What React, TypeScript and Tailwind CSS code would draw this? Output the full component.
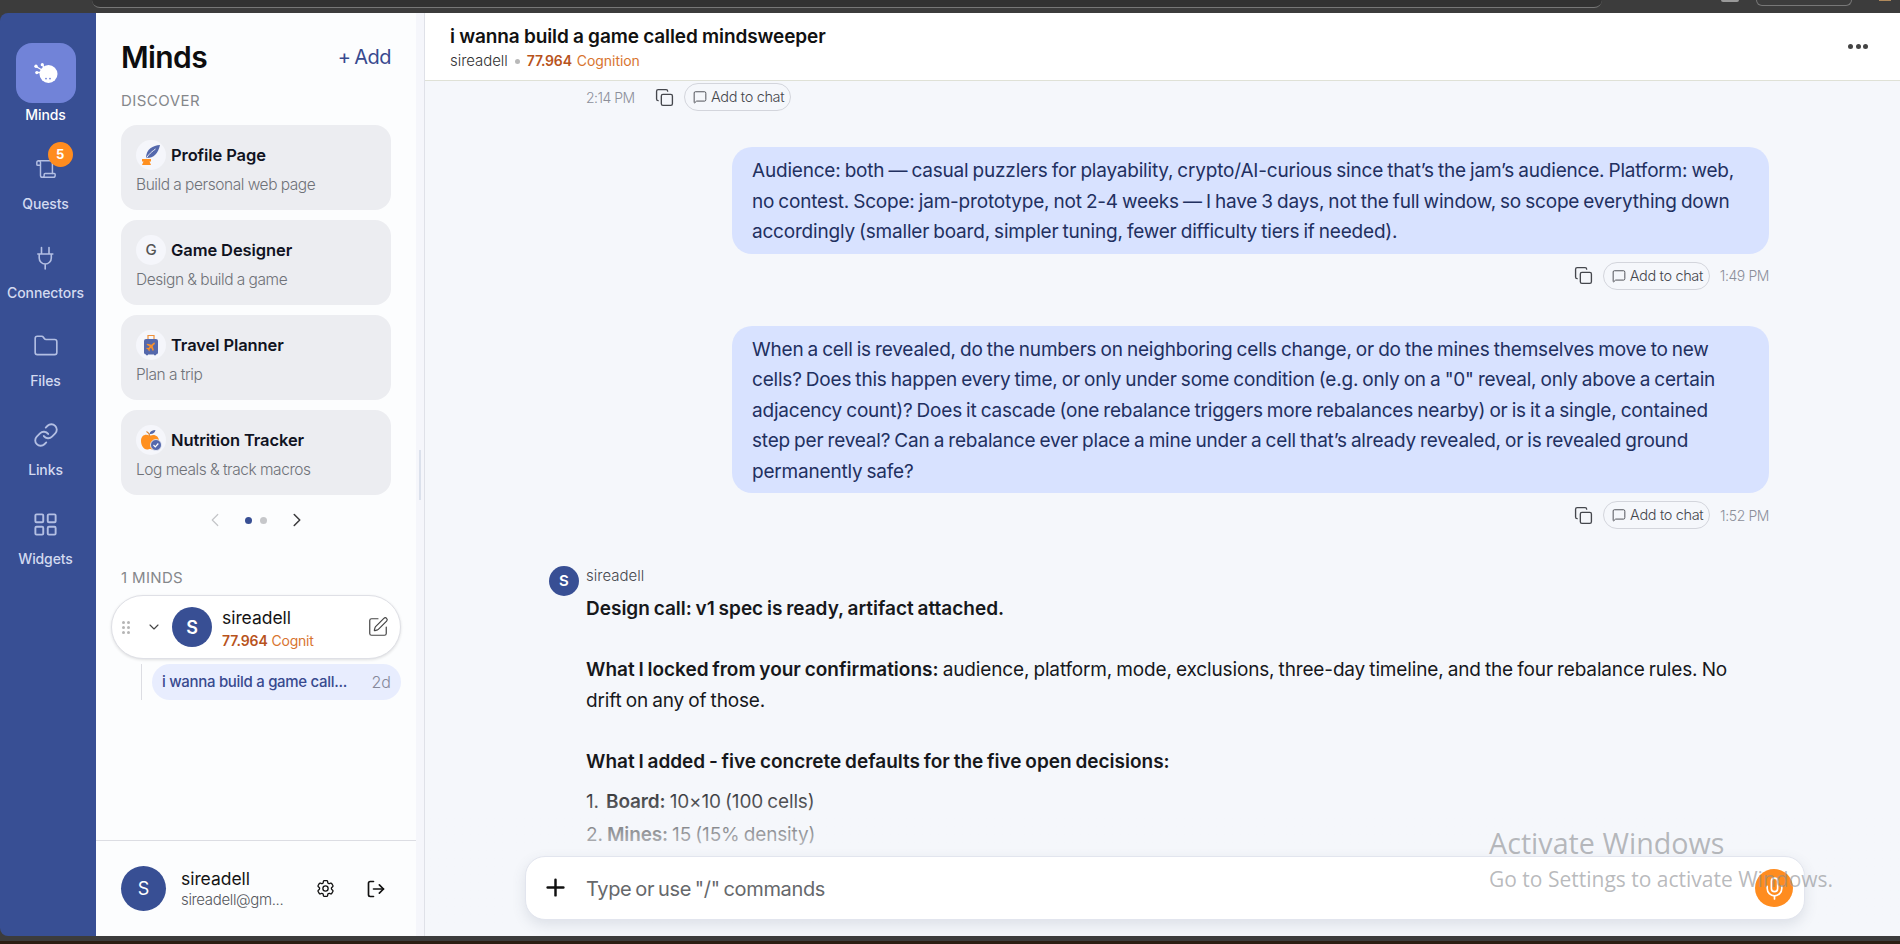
import {
  ChevronDown,
  ChevronLeft,
  ChevronRight,
  Copy,
  Folder,
  LayoutGrid,
  Link,
  LogOut,
  MessageSquare,
  Mic,
  Plus,
  Scroll,
  SquarePen,
} from "lucide-react";
import { HiOutlineCog6Tooth } from "react-icons/hi2";
import React from "react";

const MindIcon = () => (
  <svg width="24" height="20" viewBox="0 0 24 20" fill="#fff">
    <circle cx="14.5" cy="11" r="9" />
    <g stroke="#fff" strokeWidth="1.4">
      <path d="M2 3.5 8 7M8.5 1.5 10 5M3 9.5h5" />
    </g>
    <circle cx="2" cy="3.3" r="1.7" />
    <circle cx="8.3" cy="1.7" r="1.6" />
    <circle cx="2.8" cy="9.6" r="1.6" />
    <circle cx="12" cy="15.6" r="0.9" fill="#7183d8" />
    <circle cx="16" cy="15.6" r="0.9" fill="#7183d8" />
  </svg>
);

const PlugIcon = () => (
  <svg
    width="24"
    height="24"
    viewBox="0 0 24 24"
    fill="none"
    stroke="currentColor"
    strokeWidth="1.6"
    strokeLinecap="round"
  >
    <path d="M8.5 1.5V8M16 1.5V8M4.8 8h15M6.2 8v4a6 6 0 0 0 12.1 0V8M12.2 18v5" />
  </svg>
);

const QuillIcon = () => (
  <svg width="20" height="22" viewBox="0 0 20 22">
    <path
      d="M19 1C12 1.500 5 5 5 14c7 .5 12-4 14-13z"
      fill="#5468ac"
    />
    <path d="M14.500 5C9 9 6 12 4.500 16.500" stroke="#e8ebf4" strokeWidth="1" fill="none" />
    <path d="M1 15h9v2.500H8.500L10 21H1l1.500-3.500H1z" fill="#ff9020" />
  </svg>
);

const SuitcaseIcon = () => (
  <svg width="16" height="22" viewBox="0 0 16 22">
    <path d="M5 6V1.500h6V6" fill="none" stroke="#f0913a" strokeWidth="1.200" />
    <rect x="1" y="5" width="14" height="15.500" rx="2" fill="#5468ac" />
    <path d="M3 20.500h2M11 20.500h2" stroke="#5468ac" strokeWidth="1.500" />
    <g transform="rotate(45 8 12.500)" fill="#f58f2e">
      <path d="M7.100 8q.9-1.500 1.800 0v3l3.600 2v1.400l-3.600-1v2l1.200 1v.9L8 16.700l-2.100.6v-.9l1.200-1v-2l-3.600 1v-1.400l3.600-2z" />
    </g>
  </svg>
);

const AppleIcon = () => (
  <svg width="22" height="22" viewBox="0 0 22 22">
    <path
      d="M10 7C6 4.500 1 6 1 12c0 5 3.500 8.500 6 8.500 1.500 0 2-.5 3-.5s1.500.5 3 .5c3 0 6-4 6-8.500 0-5-5-7.500-9-5z"
      fill="#ff9020"
    />
    <path d="M10 7C9.500 5 8.500 3.500 6.500 2.500" stroke="#d98534" strokeWidth="1.200" fill="none" />
    <path d="M9.500 5C10 2 12.500 1 15.500 1c-.5 3-3 4.500-6 4z" fill="#5468ac" />
    <circle cx="16" cy="16" r="5.500" fill="#5468ac" stroke="#f4f5fa" strokeWidth="0.800" />
    <path d="m13.500 16 1.800 1.800 3-3.300" stroke="#fff" strokeWidth="1.200" fill="none" />
  </svg>
);

const navItems = [
  { label: "Quests", icon: <Scroll size={22} strokeWidth={1.6} />, badge: 5 },
  { label: "Connectors", icon: <PlugIcon /> },
  { label: "Files", icon: <Folder size={26} strokeWidth={1.5} /> },
  { label: "Links", icon: <Link size={26} strokeWidth={1.7} /> },
  { label: "Widgets", icon: <LayoutGrid size={27} strokeWidth={1.7} /> },
];

const cards = [
  { title: "Profile Page", text: "Build a personal web page", icon: <QuillIcon /> },
  {
    title: "Game Designer",
    text: "Design & build a game",
    icon: <span className="text-[15px] font-medium text-[#555]">G</span>,
  },
  { title: "Travel Planner", text: "Plan a trip", icon: <SuitcaseIcon /> },
  { title: "Nutrition Tracker", text: "Log meals & track macros", icon: <AppleIcon /> },
];

const BrowserBar = () => (
  <div className="flex h-[13px] shrink-0 items-start overflow-hidden bg-[#3c3c3c]">
    <div className="ml-[92px] h-2 w-[1510px] rounded-b-[14px] border-b border-[#777] bg-[#323232]" />
    <div className="ml-[119px] h-[2px] w-[18px] rounded-b-full bg-[#999]" />
    <div className="ml-[17px] h-[6px] w-[96px] rounded-b-[14px] border-x border-b border-[#777]" />
    <div className="ml-[27px] h-px w-3 bg-[#b08a5c]" />
  </div>
);

const NavRail = () => (
  <nav className="flex w-24 shrink-0 flex-col rounded-l-lg bg-[#384f94] pt-[30px]">
    <div className="flex w-[91px] flex-col items-center text-[14px] font-medium tracking-[-0.1px] text-[#d3daf0]">
      <div className="flex h-[60px] w-[60px] items-center justify-center rounded-2xl bg-[#7183d8]">
        <MindIcon />
      </div>
      <span className="mt-0.5 leading-5 text-white">Minds</span>
      {navItems.map((item) => (
        <div key={item.label} className="flex h-[88.800px] flex-col items-center">
          <div className="relative mt-[17px] flex h-[57px] w-[60px] items-center justify-center pt-0.5 text-[#b3bfe3]">
            {item.icon}
            {item.badge && (
              <span className="absolute top-0 right-[3px] flex h-[25px] w-[25px] items-center justify-center rounded-full bg-[#ff8c1f] text-[13px] font-bold text-white">
                {item.badge}
              </span>
            )}
          </div>
          <span className="leading-5">{item.label}</span>
        </div>
      ))}
    </div>
  </nav>
);

const Sidebar = () => (
  <aside className="flex w-[320px] shrink-0 flex-col bg-[#fcfdfe]">
    <div className="px-[25px] pt-[24px]">
      <div className="flex h-10 items-center justify-between">
        <h1 className="text-[30px] font-semibold tracking-[-0.6px] text-[#0d0d0f]">
          Minds
        </h1>
        <button className="text-[20px] tracking-[-0.5px] text-[#384a8f] [word-spacing:-1.5px]">
          + Add
        </button>
      </div>
      <h2 className="mt-3 text-[15px] leading-6 tracking-[0.45px] text-[#85878b]">
        DISCOVER
      </h2>
      <div className="mt-3 flex flex-col gap-2.5">
        {cards.map((card) => (
          <div key={card.title} className="h-[85px] rounded-2xl bg-[#ecedf1] px-[15px] pt-[15px]">
            <div className="flex items-center gap-[5px]">
              <div className="flex h-[30px] w-[30px] items-center justify-center rounded-full bg-[#f5f6fb]">
                {card.icon}
              </div>
              <span className="text-[16.500px] font-semibold tracking-[-0.1px] text-[#10131f]">
                {card.title}
              </span>
            </div>
            <p className="mt-[5px] text-[15.500px] leading-5 font-light tracking-[-0.42px] text-[#6f7278] [word-spacing:-0.3px]">
              {card.text}
            </p>
          </div>
        ))}
      </div>
      <div className="mt-[15px] flex h-5 items-center pl-[83px]">
        <ChevronLeft size={22} strokeWidth={1.3} className="text-[#c4c5c8]" />
        <span className="ml-[19px] h-[7px] w-[7px] rounded-full bg-[#384f94]" />
        <span className="ml-2 h-[7px] w-[7px] rounded-full bg-[#c6c7ca]" />
        <ChevronRight size={22} strokeWidth={1.7} className="ml-[19px] text-[#3b3b3d]" />
      </div>
      <h2 className="mt-9 text-[15px] leading-6 tracking-[0.35px] text-[#85878b]">
        1 MINDS
      </h2>
    </div>

    <div className="mx-[15px] mt-[5px] flex h-[64px] items-center rounded-full border border-[#dfe0e6] bg-white pl-[10px] shadow-[0_1px_3px_rgba(0,0,0,0.12)]">
      <div className="grid grid-cols-2 gap-[2px]">
        {[0, 1, 2, 3, 4, 5].map((dot) => (
          <span key={dot} className="h-[3px] w-[3px] rounded-full bg-[#b5b5b5]" />
        ))}
      </div>
      <ChevronDown size={16} strokeWidth={1.7} className="ml-[16px] text-[#444]" />
      <div className="ml-[10px] flex h-10 w-10 items-center justify-center rounded-full bg-[#384f94] text-[18px] font-semibold text-white">
        S
      </div>
      <div className="ml-[10px] w-[145px] pt-[3px]">
        <p className="text-[17.500px] leading-5 tracking-[-0.05px] text-[#141414]">sireadell</p>
        <p className="mt-0.5 h-[19px] overflow-hidden text-[14px] leading-[22px] tracking-[-0.25px] text-[#d8742f]">
          <b className="mr-[4px] font-semibold tracking-[-0.1px] text-[#b8531c]">77.964</b>Cognit
        </p>
      </div>
      <SquarePen size={22} strokeWidth={1.3} className="text-[#444]" />
    </div>

    <div className="mt-[5px] mr-[15px] ml-[45px] flex h-9 border-l border-[#dcdde3]">
      <div className="ml-[10px] flex flex-1 items-center justify-between rounded-full bg-[#e8edfe] px-[10px]">
        <span className="text-[15px] font-medium tracking-[-0.3px] text-[#384a8f]">
          i wanna build a game call...
        </span>
        <span className="text-[16px] font-light text-[#85889a]">2d</span>
      </div>
    </div>

    <div className="mt-auto flex h-[96px] items-center border-t border-[#dcdde3] pl-[25px]">
      <div className="flex h-[45px] w-[45px] items-center justify-center rounded-full bg-[#384f94] text-[18px] text-white">
        S
      </div>
      <div className="ml-[15px] w-[134px] pt-px">
        <p className="text-[17.500px] leading-[22px] tracking-[-0.05px] text-[#141414]">sireadell</p>
        <p className="text-[15px] leading-5 font-light tracking-[-0.35px] text-[#55575c]">
          sireadell@gm...
        </p>
      </div>
      <HiOutlineCog6Tooth size={21} className="text-[#111]" />
      <LogOut size={20} strokeWidth={2} className="ml-[30px] text-[#111]" />
    </div>
  </aside>
);

const AddToChat = () => (
  <button className="flex h-7 w-[107px] items-center gap-[4px] rounded-full border border-[#d3d5dc] pl-2 text-[14.500px] font-light tracking-[-0.35px] whitespace-nowrap text-[#45474d]">
    <MessageSquare size={14} strokeWidth={1.6} />
    Add to chat
  </button>
);

type BubbleProps = { lines: string[]; time: string };

const Bubble = ({ lines, time }: BubbleProps) => (
  <div className="flex flex-col items-end">
    <div className="w-[1037px] rounded-[20px] bg-[#d8e2ff] px-5 pt-[9px] pb-[6px] text-[19px] leading-[30.500px] tracking-[-0.2px] whitespace-nowrap text-[#22305f] [word-spacing:-1px]">
      {lines.map((line) => (
        <p key={line}>{line}</p>
      ))}
    </div>
    <div className="mt-2 flex h-7 items-center text-[#45474d]">
      <Copy size={19} strokeWidth={1.7} />
      <div className="ml-[10px]">
        <AddToChat />
      </div>
      <span className="ml-[10px] text-[14px] font-light tracking-[-0.4px] text-[#8c8f9a]">
        {time}
      </span>
    </div>
  </div>
);

const Chat = () => (
  <main className="relative flex flex-1 flex-col border-l border-[#dfe1e8] bg-[#f5f7fb]">
    <header className="flex h-[68px] shrink-0 items-center justify-between border-b border-[#dfe1d6] bg-white pr-[32px] pl-[25px]">
      <div className="pt-[5px]">
        <h2 className="text-[19px] leading-6 font-semibold tracking-[-0.1px] text-[#111] [word-spacing:-0.400px]">
          i wanna build a game called mindsweeper
        </h2>
        <p className="flex items-center text-[14px] leading-6">
          <span className="text-[15px] font-light tracking-[-0.05px] text-[#333]">sireadell</span>
          <span className="mr-[7px] ml-[7px] h-[5px] w-[5px] rounded-full bg-[#b9b9b9]" />
          <b className="font-semibold tracking-[-0.2px] text-[#b8531c]">77.964</b>
          <span className="ml-[5px] tracking-[-0.05px] text-[#d8742f]">Cognition</span>
        </p>
      </div>
      <div className="flex gap-[2.500px]">
        <span className="h-[5px] w-[5px] rounded-full bg-[#444]" />
        <span className="h-[5px] w-[5px] rounded-full bg-[#444]" />
        <span className="h-[5px] w-[5px] rounded-full bg-[#444]" />
      </div>
    </header>

    <div className="flex min-h-0 flex-1 flex-col overflow-hidden pr-[131px] pl-[124px]">
      <div className="mt-[2px] flex h-7 shrink-0 items-center pl-[37px] text-[#45474d]">
        <span className="w-[69px] text-[14px] font-light tracking-[-0.5px] text-[#8c8f9a]">
          2:14 PM
        </span>
        <Copy size={19} strokeWidth={1.7} className="mr-[10px]" />
        <AddToChat />
      </div>

      <div className="mt-9">
        <Bubble
          time="1:49 PM"
          lines={[
            "Audience: both — casual puzzlers for playability, crypto/AI-curious since that’s the jam’s audience. Platform: web,",
            "no contest. Scope: jam-prototype, not 2-4 weeks — I have 3 days, not the full window, so scope everything down",
            "accordingly (smaller board, simpler tuning, fewer difficulty tiers if needed).",
          ]}
        />
      </div>
      <div className="mt-9">
        <Bubble
          time="1:52 PM"
          lines={[
            "When a cell is revealed, do the numbers on neighboring cells change, or do the mines themselves move to new",
            "cells? Does this happen every time, or only under some condition (e.g. only on a \"0\" reveal, only above a certain",
            "adjacency count)? Does it cascade (one rebalance triggers more rebalances nearby) or is it a single, contained",
            "step per reveal? Can a rebalance ever place a mine under a cell that’s already revealed, or is revealed ground",
            "permanently safe?",
          ]}
        />
      </div>

      <div className="mt-9 flex gap-[7px] pt-px">
        <div className="flex h-[30px] w-[30px] items-center justify-center rounded-full bg-[#384f94] text-[15px] font-semibold text-white">
          S
        </div>
        <div className="whitespace-nowrap">
          <p className="text-[15px] leading-5 font-light text-[#45474d]">sireadell</p>
          <div className="mt-2 text-[19px] leading-[30.500px] tracking-[-0.15px] text-[#17181b] [word-spacing:-1px]">
            <p className="font-semibold tracking-normal">
              Design call: v1 spec is ready, artifact attached.
            </p>
            <p className="mt-[30.500px]">
              <b className="font-semibold tracking-normal">
                What I locked from your confirmations:
              </b>{" "}
              audience, platform, mode, exclusions, three-day timeline, and the four rebalance rules. No
            </p>
            <p>drift on any of those.</p>
            <p className="mt-[30.500px] font-semibold tracking-normal">
              What I added - five concrete defaults for the five open decisions:
            </p>
            <ol className="mt-[10px]">
              <li>
                <span className="mr-[3px]">1.</span>{" "}
                <b className="font-semibold">Board:</b> 10×10 (100 cells)
              </li>
              <li className="mt-[2.500px]">
                2. <b className="font-semibold">Mines:</b> 15 (15% density)
              </li>
            </ol>
          </div>
        </div>
      </div>
    </div>

    <div className="absolute inset-x-0 bottom-0 bg-gradient-to-b from-[#f5f7fb]/0 via-[#f5f7fb] via-60% to-[#f5f7fb] pt-[77px] pr-[95px] pb-4 pl-[100px]">
      <div className="flex h-[64px] items-center rounded-[20px] border border-[#e2e5ee] bg-white pr-[11px] pl-[16px] shadow-[0_5px_14px_rgba(60,75,100,0.13)]">
        <Plus size={27} strokeWidth={2.2} className="mb-0.5 text-[#111]" />
        <span className="ml-[17px] flex-1 pt-[2px] text-[20px] tracking-[-0.35px] text-[#66686b] [word-spacing:-1.400px]">
          Type or use "/" commands
        </span>
        <button className="flex h-[38px] w-[38px] items-center justify-center rounded-full bg-[#ff8c1f] text-white">
          <Mic size={25} strokeWidth={1.6} />
        </button>
      </div>
    </div>
  </main>
);

const App = () => {
  return (
    <div className="relative flex h-[944px] w-[1900px] flex-col overflow-hidden bg-[#3c3c3c] font-['Inter',sans-serif]">
      <BrowserBar />
      <div className="flex h-[923px]">
        <NavRail />
        <Sidebar />
        <div className="flex w-2 shrink-0 items-center bg-[#f5f6fb]">
          <span className="ml-[3px] h-[50px] w-[2px] bg-[#dbe1ec]" />
        </div>
        <Chat />
      </div>
      <div className="mt-[5px] h-[3px] bg-[#2b1d12]" />
      <div className="absolute top-[822px] left-[1489px] font-['Open_Sans',sans-serif] whitespace-nowrap text-[#8a8c90]/60">
        <p className="text-[28.700px] leading-[42px]">Activate Windows</p>
        <p className="text-[21px] leading-[30px]">Go to Settings to activate Windows.</p>
      </div>
    </div>
  );
};

export default App;
